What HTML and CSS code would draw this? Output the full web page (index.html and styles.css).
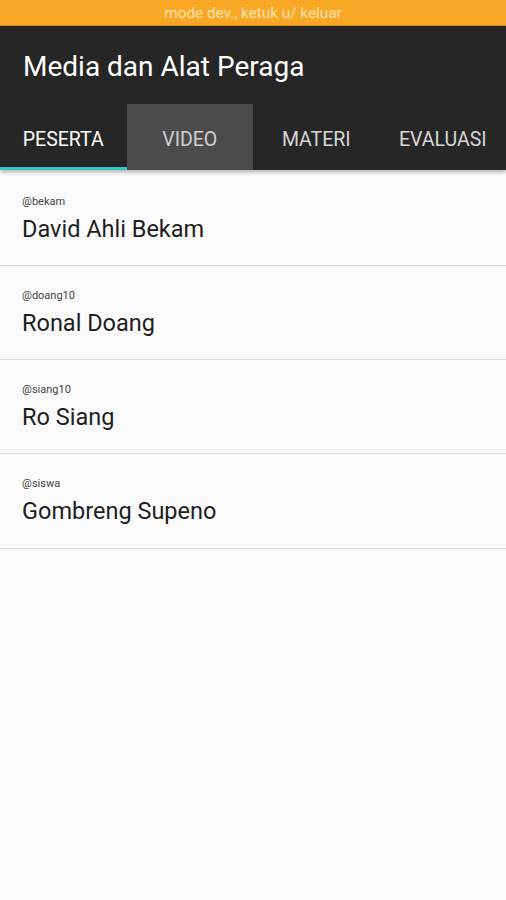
FILE: index.html
```html
<!DOCTYPE html>
<html lang="id">
<head>
    <meta charset="UTF-8">
    <meta name="viewport" content="width=device-width, initial-scale=1.0">
    <title>Media dan Alat Peraga</title>
    <link rel="stylesheet" href="styles.css">
</head>
<body>
    <div class="devbar">mode dev., ketuk u/ keluar</div>
    <div class="appbar">
        <h1 class="title">Media dan Alat Peraga</h1>
        <div class="tabs">
            <div class="tab active">PESERTA</div>
            <div class="tab pressed">VIDEO</div>
            <div class="tab">MATERI</div>
            <div class="tab">EVALUASI</div>
        </div>
    </div>
    <ul class="list">
        <li class="item">
            <span class="handle">@bekam</span>
            <span class="name">David Ahli Bekam</span>
        </li>
        <li class="item">
            <span class="handle">@doang10</span>
            <span class="name">Ronal Doang</span>
        </li>
        <li class="item">
            <span class="handle">@siang10</span>
            <span class="name">Ro Siang</span>
        </li>
        <li class="item">
            <span class="handle">@siswa</span>
            <span class="name">Gombreng Supeno</span>
        </li>
    </ul>
</body>
</html>
```

FILE: styles.css
```css
body {
    margin: 0;
    font-family: Roboto, "Liberation Sans", sans-serif;
    background-color: #fafafa;
    min-height: 900px;
}
.devbar {
    height: 26px;
    line-height: 26px;
    background-color: #f9a825;
    color: #fde3b0;
    font-size: 15.3px;
    text-align: center;
    border-bottom: 1px solid #d9901c;
    box-sizing: border-box;
}
.appbar {
    background-color: #262626;
    box-shadow: 0 2px 4px rgba(0,0,0,0.3);
    position: relative;
}
.title {
    margin: 0;
    height: 78px;
    line-height: 82px;
    padding-left: 23px;
    font-size: 28px;
    font-weight: normal;
    color: #ffffff;
}
.tabs {
    display: flex;
    height: 66px;
}
.tab {
    flex: 1;
    display: flex;
    align-items: center;
    justify-content: center;
    padding-top: 4px;
    font-size: 19.5px;
    color: #d6d6d6;
    box-sizing: border-box;
}
.tab.active {
    color: #ffffff;
    border-bottom: 3px solid #39c6c0;
    padding-top: 7px;
}
.tab.pressed {
    background-color: #4b4b4b;
    color: #cfcfcf;
}
.list {
    list-style: none;
    margin: 2px 0 0;
    padding: 0;
}
.item {
    height: 94px;
    border-bottom: 1px solid #dcdcdc;
    padding: 23px 22px 0;
    box-sizing: border-box;
    display: flex;
    flex-direction: column;
}
.item:last-child {
    height: 95px;
}
.handle {
    font-size: 11px;
    color: #444444;
    line-height: 14px;
}
.name {
    font-size: 23.5px;
    color: #1e1e1e;
    margin-top: 6px;
}
```
